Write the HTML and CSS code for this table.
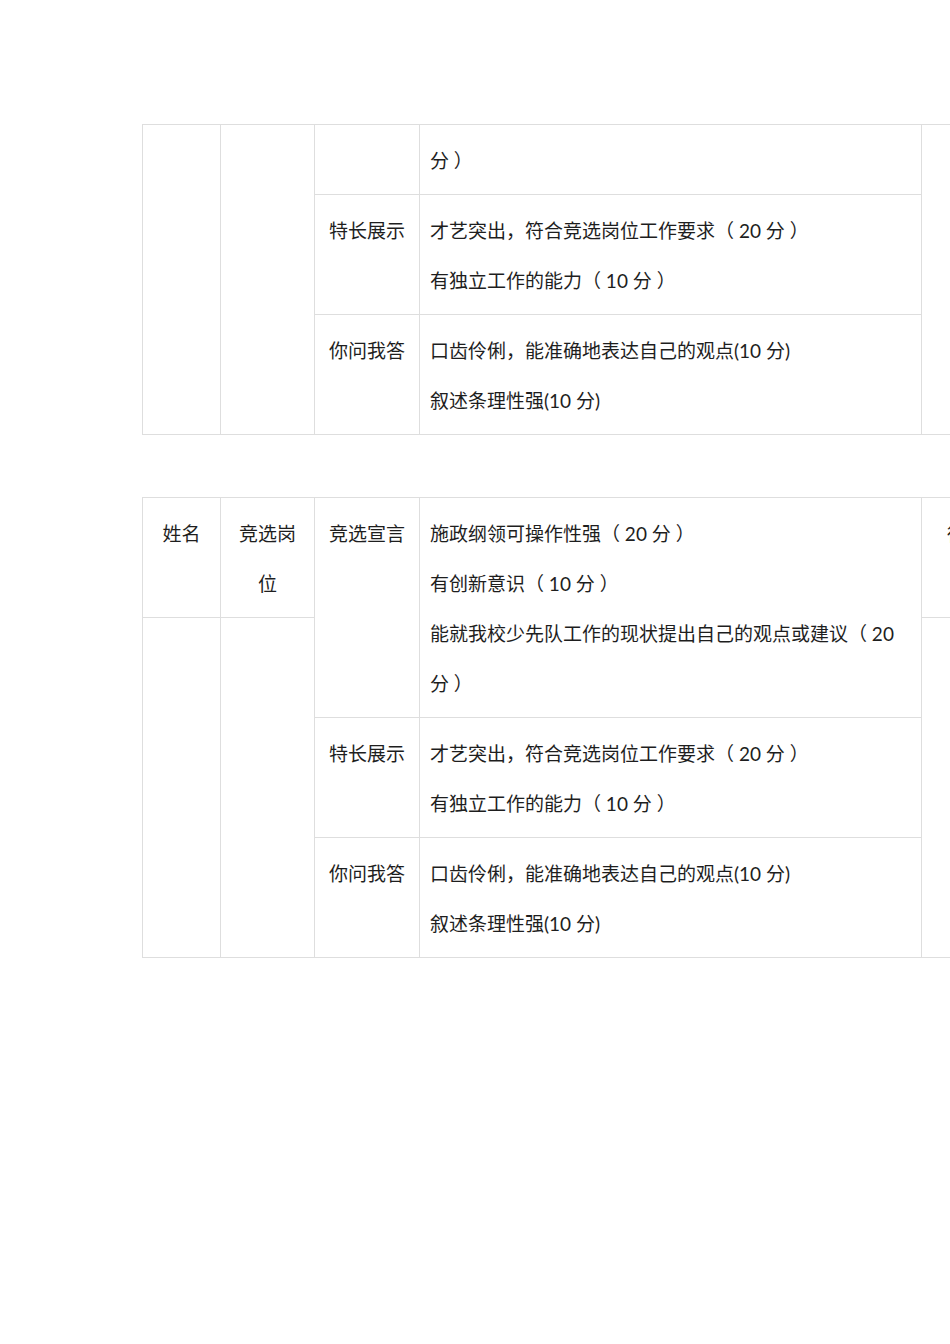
FILE: index.html
```html
<!DOCTYPE html>
<html lang="zh-CN">
<head>
<meta charset="utf-8">
<title>竞选评分表</title>
<link rel="stylesheet" href="styles.css">
</head>
<body>
<div class="page">
  <table class="score t1">
    <colgroup>
      <col class="c1"><col class="c2"><col class="c3"><col class="c4"><col class="c5">
    </colgroup>
    <tr class="h70">
      <td rowspan="3"></td>
      <td rowspan="3"></td>
      <td class="item"></td>
      <td class="desc"><p>分 ）</p></td>
      <td rowspan="3"></td>
    </tr>
    <tr class="h120">
      <td class="item">特长展示</td>
      <td class="desc"><p>才艺突出<span class="pc">，</span>符合竞选岗位工作要求（ 20 分 ）</p><p>有独立工作的能力（ 10 分 ）</p></td>
    </tr>
    <tr class="h120">
      <td class="item">你问我答</td>
      <td class="desc"><p>口齿伶俐<span class="pc">，</span>能准确地表达自己的观点(10 分)</p><p>叙述条理性强(10 分)</p></td>
    </tr>
  </table>

  <table class="score t2">
    <colgroup>
      <col class="c1"><col class="c2"><col class="c3"><col class="c4"><col class="c5">
    </colgroup>
    <tr class="h120">
      <td class="head">姓名</td>
      <td class="head">竞选岗位</td>
      <td class="item" rowspan="2">竞选宣言</td>
      <td class="desc" rowspan="2"><p>施政纲领可操作性强（ 20 分 ）</p><p>有创新意识（ 10 分 ）</p><p>能就我校少先队工作的现状提出自己的观点或建议（ 20 分 ）</p></td>
      <td class="head">得分</td>
    </tr>
    <tr class="h100">
      <td rowspan="3"></td>
      <td rowspan="3"></td>
      <td rowspan="3"></td>
    </tr>
    <tr class="h120">
      <td class="item">特长展示</td>
      <td class="desc"><p>才艺突出<span class="pc">，</span>符合竞选岗位工作要求（ 20 分 ）</p><p>有独立工作的能力（ 10 分 ）</p></td>
    </tr>
    <tr class="h120">
      <td class="item">你问我答</td>
      <td class="desc"><p>口齿伶俐<span class="pc">，</span>能准确地表达自己的观点(10 分)</p><p>叙述条理性强(10 分)</p></td>
    </tr>
  </table>
</div>
</body>
</html>
```

FILE: styles.css
```css
html, body {
  margin: 0;
  padding: 0;
  background: #ffffff;
}
body {
  overflow: hidden;
  width: 950px;
  height: 1344px;
}
.page {
  padding: 124px 0 0 142px;
  font-family: Lato, "Noto Sans CJK SC", sans-serif;
  font-size: 19px;
  line-height: 50px;
  color: #1e1e1e;
}
.score {
  border-collapse: collapse;
  table-layout: fixed;
  width: 868px;
}
.t2 {
  margin-top: 62px;
}
.c1 { width: 78px; }
.c2 { width: 94px; }
.c3 { width: 105px; }
.c4 { width: 502px; }
.c5 { width: 89px; }
.score td {
  border: 1px solid #dedede;
  padding: 11px 10px 8px 10px;
  vertical-align: top;
  text-align: center;
}
.score td.desc {
  text-align: left;
}
.desc p {
  margin: 0;
}
.pc {
  font-family: "Noto Sans CJK TC", sans-serif;
  line-height: 1;
}
.h70 { height: 69px; }
.h100 { height: 99px; }
.h120 { height: 119px; }
```
